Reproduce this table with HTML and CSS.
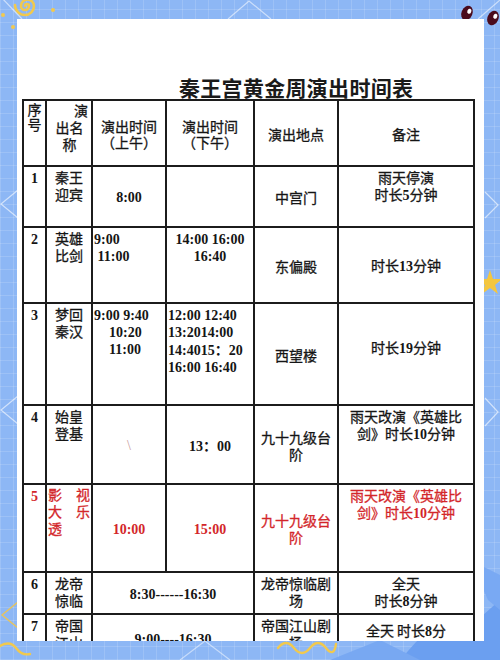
FILE: index.html
```html
<!DOCTYPE html>
<html lang="zh">
<head>
<meta charset="utf-8">
<title>秦王宫黄金周演出时间表</title>
<link rel="stylesheet" href="styles.css">
</head>
<body>
<div class="page">
  <svg class="deco" width="500" height="660" viewBox="0 0 500 660" aria-hidden="true">
    <!-- top-left swirl and dots -->
    <path d="M27 6 m-2 0 a2 2 0 1 1 4 0 a4 4 0 1 1 -8 0 a6.5 6.5 0 1 1 13 0 a9 9 0 0 1 -9 9 a10 10 0 0 1 -10 -10" fill="none" stroke="#f1c94e" stroke-width="2.6" stroke-linecap="round"/>
    <circle cx="3" cy="15" r="2" fill="#f1c94e"/>
    <circle cx="13" cy="27" r="2" fill="#f1c94e"/>
    <circle cx="53" cy="10" r="2" fill="#f1c94e"/>
    <path d="M0 -4 L22 19" stroke="rgba(255,255,255,0.55)" stroke-width="1.2"/>
    <!-- top center chevron -->
    <path d="M228 19 L249 1 L271 19" fill="none" stroke="rgba(255,255,255,0.55)" stroke-width="1.2"/>
    <!-- top-right eyes -->
    <g transform="translate(467 13) rotate(22)">
      <ellipse rx="5.5" ry="7.5" fill="#4a0b1c"/>
      <ellipse cx="1.5" cy="-2.5" rx="2" ry="2.6" fill="#fff"/>
    </g>
    <g transform="translate(493 18) rotate(22)">
      <ellipse rx="5.5" ry="7.5" fill="#4a0b1c"/>
      <ellipse cx="1.5" cy="-2.5" rx="2" ry="2.6" fill="#fff"/>
    </g>
    <path d="M478 19 L500 0" stroke="rgba(255,255,255,0.55)" stroke-width="1.2"/>
    <!-- side chevrons -->
    <path d="M18 190 L1 204 L18 218" fill="none" stroke="rgba(255,255,255,0.6)" stroke-width="1.2"/>
    <path d="M18 396 L1 410 L18 424" fill="none" stroke="rgba(255,255,255,0.6)" stroke-width="1.2"/>
    <path d="M18 602 L2 615 L18 628" fill="none" stroke="#e9c45a" stroke-width="1.4"/>
    <path d="M485 192 L498 205 L485 218" fill="none" stroke="rgba(255,255,255,0.6)" stroke-width="1.2"/>
    <path d="M485 398 L498 412 L485 426" fill="none" stroke="rgba(255,255,255,0.6)" stroke-width="1.2"/>
    <!-- right star -->
    <path d="M490 270 L493 279 L502 279 L495 285 L498 294 L490 288 L482 294 L485 285 L478 279 L487 279 Z" fill="#f4c63e"/>
    <!-- bottom shapes -->
    <path d="M400 660 L440 615 L455 640 L500 600 L500 660 Z" fill="#6b9ff0"/>
    <path d="M330 660 L380 640 L420 660 Z" fill="#78a8f2"/>
    <path d="M470 560 L500 575 L500 610 L488 600 Z" fill="#79a9f3"/>
    <path d="M278 648 q8 -10 16 0 t16 0 t16 0 t10 -4" fill="none" stroke="#f1c94e" stroke-width="2.4" stroke-linecap="round"/>
    <path d="M0 646 q10 -6 16 2 t14 6" fill="none" stroke="#f1c94e" stroke-width="2.4" stroke-linecap="round"/>
    <path d="M180 660 L205 641 L230 660" fill="none" stroke="rgba(255,255,255,0.5)" stroke-width="1.2"/>
  </svg>

  <div class="card">
    <h1 class="title">秦王宫黄金周演出时间表</h1>
    <table class="sched">
      <colgroup>
        <col class="c-no"><col class="c-name"><col class="c-am"><col class="c-pm"><col class="c-place"><col class="c-note">
      </colgroup>
      <tr class="r-head">
        <td class="top hd-no">序<br>号</td>
        <td class="top hd-name"><div class="right">演</div><div>出名</div><div>称</div></td>
        <td class="mid tight">演出时间<br>（上午）</td>
        <td class="mid tight">演出时间<br>（下午）</td>
        <td class="mid">演出地点</td>
        <td class="mid">备注</td>
      </tr>
      <tr class="r1">
        <td class="top num">1</td>
        <td class="top">秦王<br>迎宾</td>
        <td class="mid num">8:00</td>
        <td></td>
        <td class="mid">中宫门</td>
        <td class="top">雨天停演<br>时长<b class="d">5</b>分钟</td>
      </tr>
      <tr class="r2">
        <td class="top num">2</td>
        <td class="top">英雄<br>比剑</td>
        <td class="top num left">9:00<br>&nbsp;11:00</td>
        <td class="top num">14:00 16:00<br>16:40</td>
        <td class="mid">东偏殿</td>
        <td class="mid">时长<b class="d">13</b>分钟</td>
      </tr>
      <tr class="r3">
        <td class="top num">3</td>
        <td class="top">梦回<br>秦汉</td>
        <td class="top num left"><div>9:00 9:40</div><div class="ind">10:20</div><div class="ind">11:00</div></td>
        <td class="top num left">12:00 12:40<br>13:2014:00<br>14:4015<span class="fw">：</span>20<br>16:00 16:40</td>
        <td class="mid">西望楼</td>
        <td class="mid lift">时长<b class="d">19</b>分钟</td>
      </tr>
      <tr class="r4">
        <td class="top num">4</td>
        <td class="top">始皇<br>登基</td>
        <td class="mid slash">\</td>
        <td class="mid num">13<span class="fw">：</span>00</td>
        <td class="mid">九十九级台<br>阶</td>
        <td class="top">雨天改演《英雄比<br>剑》时长<b class="d">10</b>分钟</td>
      </tr>
      <tr class="r5 red">
        <td class="top num">5</td>
        <td class="top just-cell"><div class="just"><span>影</span><span>视</span></div><div class="just"><span>大</span><span>乐</span></div><div class="just"><span>透</span></div></td>
        <td class="mid num">10:00</td>
        <td class="mid num">15:00</td>
        <td class="mid">九十九级台<br>阶</td>
        <td class="top">雨天改演《英雄比<br>剑》时长<b class="d">10</b>分钟</td>
      </tr>
      <tr class="r6">
        <td class="top num">6</td>
        <td class="top">龙帝<br>惊临</td>
        <td class="mid num" colspan="2">8:30------16:30</td>
        <td class="top">龙帝惊临剧<br>场</td>
        <td class="top">全天<br>时长<b class="d">8</b>分钟</td>
      </tr>
      <tr class="r7">
        <td class="top num">7</td>
        <td class="top">帝国<br>江山</td>
        <td class="mid num" colspan="2">9:00----16:30</td>
        <td class="top">帝国江山剧<br>场</td>
        <td class="mid">全天 时长<b class="d">8</b>分<br>钟</td>
      </tr>
    </table>
  </div>
</div>
</body>
</html>
```

FILE: styles.css
```css
html, body {
  margin: 0;
  padding: 0;
}

body {
  width: 500px;
  height: 660px;
  overflow: hidden;
  font-family: "Noto Sans CJK SC", "Noto Sans", sans-serif;
}

.page {
  position: relative;
  width: 500px;
  height: 660px;
  box-sizing: border-box;
  padding: 19px 16px 19px 17px;
  overflow: hidden;
  background-color: #8db7f5;
  background-image:
    repeating-linear-gradient(0deg, rgba(255,255,255,0.14) 0 1px, transparent 1px 13px),
    repeating-linear-gradient(90deg, rgba(255,255,255,0.14) 0 1px, transparent 1px 13px);
}

.deco {
  position: absolute;
  left: 0;
  top: 0;
}

.card {
  position: relative;
  height: 622px;
  background: #ffffff;
  overflow: hidden;
  box-sizing: border-box;
  padding: 0 10px 0 5px;
}

.title {
  margin: 0;
  padding: 56px 0 0 157px;
  height: 80px;
  box-sizing: border-box;
  font-size: 21px;
  line-height: 24px;
  font-weight: 700;
  letter-spacing: 0.3px;
  color: #1a1a1a;
  white-space: nowrap;
}

.sched {
  border-collapse: collapse;
  table-layout: fixed;
  width: 453px;
  color: #151515;
  font-size: 14px;
  line-height: 17px;
  font-weight: 400;
  -webkit-text-stroke: 0.3px currentColor;
}

.c-no { width: 23px; }
.c-name { width: 46px; }
.c-am { width: 74px; }
.c-pm { width: 88px; }
.c-place { width: 84px; }
.c-note { width: 136px; }

.sched td {
  border: 2px solid #1c1c1c;
  padding: 2px 1px 0;
  text-align: center;
  white-space: nowrap;
  overflow: hidden;
}

.r-head { height: 66px; }
.r1 { height: 61px; }
.r2 { height: 76px; }
.r3 { height: 102px; }
.r4 { height: 79px; }
.r5 { height: 88px; }
.r6 { height: 42px; }
.r7 { height: 48px; }

.top { vertical-align: top; }
.mid { vertical-align: middle; }

.sched td.hd-no { line-height: 15px; padding-top: 1px; }
.sched td.hd-name { padding: 1px 3px 0 4px; }
.hd-name .right { text-align: right; }
.sched td.tight { line-height: 16px; }

.num {
  font-family: "Liberation Serif", "Noto Sans CJK SC", serif;
  font-weight: 700;
  -webkit-text-stroke: 0;
}

.sched td.top.num { padding-top: 3px; }

.d {
  font-family: "Liberation Serif", serif;
  font-weight: 700;
  -webkit-text-stroke: 0;
}

.fw {
  font-family: "Noto Sans CJK SC", sans-serif;
  font-weight: 700;
}

.sched td.left {
  text-align: left;
  padding-left: 1px;
}

.ind { padding-left: 15px; }

.sched td.lift { padding-bottom: 14px; }

.slash {
  font-family: "Liberation Serif", serif;
  color: #c99c9c;
  -webkit-text-stroke: 0;
}

.red { color: #d3262a; }

.sched td.just-cell { padding: 1px 1px 0; }

.just {
  display: flex;
  justify-content: space-between;
}
```
